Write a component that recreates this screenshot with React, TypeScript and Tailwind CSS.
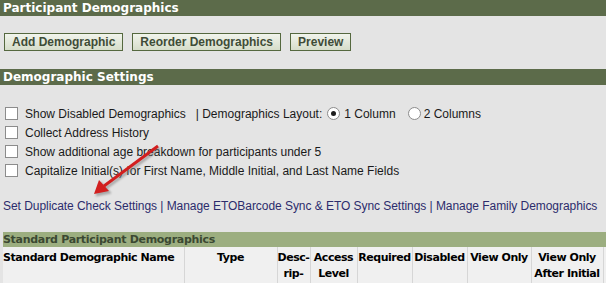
import React from 'react';

const headFont = { fontFamily: '"DejaVu Sans", Verdana, sans-serif' };

const SectionBar = ({ title }: { title: string }) => (
	<div className="h-[16px] bg-[#5c6b4a] pl-[3px] text-[12px] font-bold leading-[16px] text-white" style={headFont}>
		{title}
	</div>
);

const GreenButton = ({ label }: { label: string }) => (
	<button className="h-[18px] border border-[#55683f] bg-gradient-to-b from-[#f1f4ec] to-[#d6ddca] px-[7px] text-[12px] font-bold leading-[16px] text-[#3f4c37] [font-family:'Liberation_Sans',Arial,sans-serif]">
		{label}
	</button>
);

const Box = () => <span className="inline-block size-[13px] shrink-0 border border-[#8c8c8c] bg-white" />;

const Radio = ({ on }: { on?: boolean }) => (
	<span className="inline-flex size-[13px] shrink-0 items-center justify-center rounded-full border border-[#8c8c8c] bg-white">
		{on && <span className="size-[5px] rounded-full bg-[#1e1e1e]" />}
	</span>
);

const CheckRow = ({ children }: { children: React.ReactNode }) => (
	<div className="flex h-[19px] items-center gap-[7px] pl-[5px]">
		<Box />
		<div className="flex items-center">{children}</div>
	</div>
);

const columns = [
	{ lines: ['Standard Demographic Name'], w: 'w-[181px]' },
	{ lines: ['Type'], w: 'w-[93px]' },
	{ lines: ['Desc-', 'rip-'], w: 'w-[33px]' },
	{ lines: ['Access', 'Level'], w: 'w-[47px]' },
	{ lines: ['Required'], w: 'w-[55px]' },
	{ lines: ['Disabled'], w: 'w-[55px]' },
	{ lines: ['View Only'], w: 'w-[64px]' },
	{ lines: ['View Only', 'After Initial'], w: 'w-[72px]' },
	{ lines: [], w: 'w-[60px]' }
];

export default function App() {
	return (
		<div className="relative h-[283px] w-[606px] overflow-hidden bg-[#e4e4e4] text-[12px] text-[#1a1a1a] [font-family:'Liberation_Sans',Tahoma,sans-serif]">
			<SectionBar title="Participant Demographics" />

			<div className="mt-[17px] flex gap-[9px] pl-[4px]">
				<GreenButton label="Add Demographic" />
				<GreenButton label="Reorder Demographics" />
				<GreenButton label="Preview" />
			</div>

			<div className="mt-[18px]">
				<SectionBar title="Demographic Settings" />
			</div>

			<div className="mt-[19px]">
				<CheckRow>
					<span>Show Disabled Demographics</span>
					<span className="ml-[10px]">| Demographics Layout:</span>
					<span className="ml-[5px] flex items-center gap-[4px]"><Radio on />1 Column</span>
					<span className="ml-[12px] flex items-center gap-[3px]"><Radio />2 Columns</span>
				</CheckRow>
				<CheckRow>Collect Address History</CheckRow>
				<CheckRow>Show additional age breakdown for participants under 5</CheckRow>
				<CheckRow>Capitalize Initial(s) for First Name, Middle Initial, and Last Name Fields</CheckRow>
			</div>

			<div className="mt-[17px] pl-[3px] tracking-[-0.05px] text-[#2c2c6c]">
				<a>Set Duplicate Check Settings</a> | <a>Manage ETOBarcode Sync &amp; ETO Sync Settings</a> | <a>Manage Family Demographics</a>
			</div>

			<div className="ml-[3px] mt-[17px] w-[660px]">
				<div className="h-[15px] bg-[#9cae80] text-[11px] font-bold leading-[15px] tracking-[-0.3px] text-[#3b4832]" style={headFont}>
					Standard Participant Demographics
				</div>
				<table className="w-[660px] table-fixed border-collapse bg-[#f0f0f0]" style={headFont}>
					<thead>
						<tr className="h-[36px] border-b border-black">
							{columns.map((c, i) => (
								<th
									key={i}
									className={`${c.w} ${i > 0 ? 'border-l border-[#d6d6d6] text-center' : 'text-left'} whitespace-nowrap px-0 pt-[3px] align-top text-[11px] font-bold leading-[16px] tracking-[-0.45px] text-black`}
								>
									{c.lines.map((l, j) => (
										<div key={j}>{l}</div>
									))}
								</th>
							))}
						</tr>
					</thead>
				</table>
			</div>

			<svg className="pointer-events-none absolute left-0 top-0" width="606" height="283">
				<defs>
					<filter id="sh" x="-20%" y="-20%" width="140%" height="140%">
						<feGaussianBlur stdDeviation="1.2" />
					</filter>
				</defs>
				<g transform="translate(2 2)" fill="#777" stroke="#777" opacity="0.55" filter="url(#sh)">
					<line x1="158" y1="146" x2="104" y2="186" strokeWidth="3" />
					<polygon points="94,194 99,180 109,191" />
				</g>
				<line x1="158" y1="146" x2="104" y2="186" stroke="#d21f1f" strokeWidth="3" />
				<polygon points="94,194 99,180 109,191" fill="#d21f1f" />
			</svg>
		</div>
	);
}
